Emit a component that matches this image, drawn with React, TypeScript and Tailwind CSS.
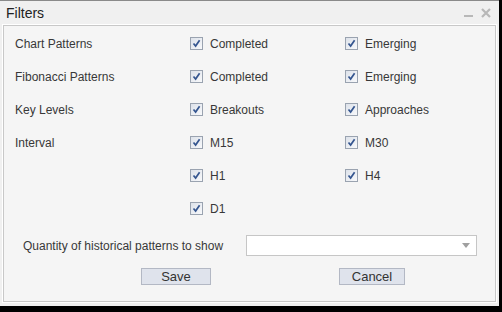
import React from "react";

function Check({ label }: { label: string }) {
  return (
    <div className="flex items-center gap-[7px]">
      <span className="flex h-[13px] w-[13px] items-center justify-center border border-[#9aa3b0] bg-gradient-to-br from-[#dde2ea] to-[#f8f9fb]">
        <svg width="9" height="9" viewBox="0 0 9 9">
          <path d="M1.5 4.5 L3.6 7 L7.6 1.2" fill="none" stroke="#34558f" strokeWidth="1.7" />
        </svg>
      </span>
      <span>{label}</span>
    </div>
  );
}

const rows: [string, string | null, string | null][] = [
  ["Chart Patterns", "Completed", "Emerging"],
  ["Fibonacci Patterns", "Completed", "Emerging"],
  ["Key Levels", "Breakouts", "Approaches"],
  ["Interval", "M15", "M30"],
  ["", "H1", "H4"],
  ["", "D1", null],
];

export default function App() {
  return (
    <div className="h-[312px] w-[502px] bg-black font-['Liberation_Sans',sans-serif] text-[12px] text-[#383838]">
      <div className="flex h-[306px] w-[499px] flex-col border-t border-[#8a8a8a] bg-[#f0f0f0]">
        <div className="flex h-[24px] items-center justify-between pl-[6px] pr-[8px]">
          <span className="text-[14px] text-[#222]">Filters</span>
          <div className="flex items-center gap-[8px]">
            <span className="mt-[6px] h-[2px] w-[9px] bg-[#b8b8b8]" />
            <svg width="10" height="10" viewBox="0 0 10 10">
              <path d="M1 1 L9 9 M9 1 L1 9" stroke="#b8b8b8" strokeWidth="2.2" />
            </svg>
          </div>
        </div>
        <div className="mx-[3px] mb-[4px] flex flex-1 flex-col border border-[#c8c8c8] bg-[#f5f5f5] outline outline-1 outline-white">
          <div className="flex flex-col pt-[1px]">
            {rows.map(([label, a, b], i) => (
              <div key={i} className="flex h-[33px] items-center">
                <span className="w-[186px] pl-[11px]">{label}</span>
                <div className="w-[155px]">{a && <Check label={a} />}</div>
                <div>{b && <Check label={b} />}</div>
              </div>
            ))}
          </div>
          <div className="mt-[10px] flex items-center">
            <span className="w-[242px] pl-[19px]">Quantity of historical patterns to show</span>
            <div className="flex h-[21px] w-[231px] items-center justify-end border border-[#c6c6c6] bg-white pr-[6px]">
              <svg width="8" height="5" viewBox="0 0 8 5">
                <path d="M0 0 L8 0 L4 5 Z" fill="#a0a0a0" />
              </svg>
            </div>
          </div>
          <div className="mt-[12px] flex gap-[128px] pl-[137px]">
            <button className="h-[17px] w-[70px] border border-[#b3b8c4] bg-[#dfe3ec] text-[13px] leading-none text-[#333]">
              Save
            </button>
            <button className="h-[17px] w-[66px] border border-[#b3b8c4] bg-[#dfe3ec] text-[13px] leading-none text-[#333]">
              Cancel
            </button>
          </div>
        </div>
      </div>
    </div>
  );
}
